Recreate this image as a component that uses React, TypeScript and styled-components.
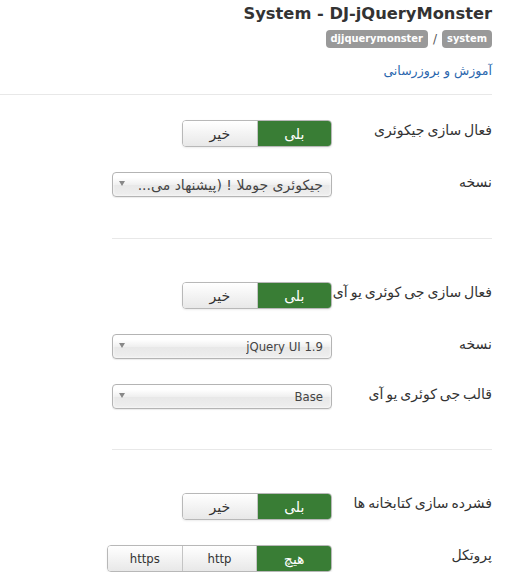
import React from "react";
import styled, { createGlobalStyle } from "styled-components";

const GlobalStyle = createGlobalStyle`
	body {
		margin: 0;
		background: #fff;
		font-family: "DejaVu Sans", sans-serif;
		font-size: 13px;
		color: #333;
	}
`;

const Page = styled.div`
	width: 506px;
	box-sizing: border-box;
	padding: 4px 14px 0 0;
	direction: rtl;
`;

const Header = styled.header`
	text-align: right;
`;

const Title = styled.h1`
	margin: 0;
	direction: ltr;
	font-family: "DejaVu Sans", sans-serif;
	font-size: 16.3px;
	line-height: 20px;
	font-weight: 700;
	color: #333;
`;

const Crumbs = styled.div`
	margin-top: 6px;
	display: flex;
	justify-content: flex-end;
	align-items: center;
	gap: 5px;
	direction: ltr;
	color: #555;
	font-size: 12px;
`;

const Badge = styled.span`
	display: inline-block;
	height: 18px;
	line-height: 18px;
	padding: 0 5px;
	border-radius: 4px;
	background: #999;
	color: #fff;
	font-family: "DejaVu Sans Condensed", "DejaVu Sans", sans-serif;
	font-weight: 700;
	font-size: 11px;
`;

const HelpLink = styled.a`
	display: block;
	margin-top: 13px;
	line-height: 20px;
	font-size: 12.5px;
	color: #2a66ad;
	text-decoration: none;
`;

const Divider = styled.hr<{ $indent?: number; $top: number; $bottom: number }>`
	border: 0;
	border-top: 1px solid #e8e8e8;
	height: 0;
	margin: ${(p) => `${p.$top}px 0 ${p.$bottom}px ${p.$indent ?? 0}px`};
`;

const Fieldset = styled.div`
	display: flex;
	flex-direction: column;
	gap: 25px;
`;

const Row = styled.div`
	display: flex;
	align-items: flex-start;
`;

const Label = styled.label`
	width: 160px;
	flex-shrink: 0;
	white-space: nowrap;
	line-height: 20px;
	font-size: 14px;
	word-spacing: -1.5px;
	color: #333;
	text-align: right;
`;

const ToggleGroup = styled.div<{ $count: number }>`
	display: flex;
	width: ${(p) => p.$count * 75}px;
	height: 27px;
	border: 1px solid #b8b8b8;
	border-radius: 4px;
	overflow: hidden;
	box-sizing: border-box;
	box-shadow: 0 1px 2px rgba(0, 0, 0, 0.08);
`;

const ToggleButton = styled.span<{ $active?: boolean; $latin?: boolean }>`
	flex: 1;
	display: flex;
	align-items: center;
	justify-content: center;
	font-family: ${(p) =>
		p.$latin ? '"DejaVu Sans Condensed", "DejaVu Sans", sans-serif' : '"DejaVu Sans", sans-serif'};
	font-size: ${(p) => (p.$latin ? "13px" : "14px")};
	color: ${(p) => (p.$active ? "#fff" : "#333")};
	background: ${(p) =>
		p.$active ? "#397d35" : "linear-gradient(#ffffff, #e8e8e8)"};
	& + & {
		border-right: 1px solid #c4c4c4;
	}
`;

const Select = styled.div`
	width: 220px;
	height: 25px;
	box-sizing: border-box;
	display: flex;
	align-items: center;
	justify-content: space-between;
	padding: 0 8px 0 6px;
	border: 1px solid #b4b4b4;
	border-radius: 4px;
	background: linear-gradient(#ffffff 20%, #f0f0f0 50%, #e8e8e8 52%, #eeeeee);
	box-shadow: 0 0 3px #fff inset, 0 1px 1px rgba(0, 0, 0, 0.08);
	color: #444;
`;

const SelectText = styled.span<{ $latin?: boolean }>`
	white-space: nowrap;
	overflow: hidden;
	font-family: ${(p) =>
		p.$latin ? '"DejaVu Sans Condensed", "DejaVu Sans", sans-serif' : '"DejaVu Sans", sans-serif'};
	font-size: ${(p) => (p.$latin ? "13px" : "14px")};
`;

const Caret = styled.span`
	flex-shrink: 0;
	width: 0;
	height: 0;
	border-top: 5px solid #888;
	border-left: 3px solid transparent;
	border-right: 3px solid transparent;
	margin-top: -2px;
`;

const isLatin = (s: string) => /^[\x00-\x7f]+$/.test(s);

const Toggle = ({
	options,
	active = 0,
}: {
	options: string[];
	active?: number;
}) => (
	<ToggleGroup $count={options.length}>
		{options.map((o, i) => (
			<ToggleButton key={o} $active={i === active} $latin={isLatin(o)}>
				{o}
			</ToggleButton>
		))}
	</ToggleGroup>
);

const Dropdown = ({ value }: { value: string }) => (
	<Select>
		<SelectText $latin={isLatin(value)}>{value}</SelectText>
		<Caret />
	</Select>
);

export default function App() {
	return (
		<>
			<GlobalStyle />
			<Page>
				<Header>
					<Title>System - DJ-jQueryMonster</Title>
					<Crumbs>
						<Badge>djjquerymonster</Badge>/<Badge>system</Badge>
					</Crumbs>
					<HelpLink href="#">آموزش و بروزرسانی</HelpLink>
				</Header>
				<Divider $top={13} $bottom={25} />
				<Fieldset>
					<Row>
						<Label>فعال سازی جیکوئری</Label>
						<Toggle options={["بلی", "خیر"]} />
					</Row>
					<Row>
						<Label>نسخه</Label>
						<Dropdown value="جیکوئری جوملا ! (پیشنهاد می..." />
					</Row>
				</Fieldset>
				<Divider $indent={112} $top={41} $bottom={43} />
				<Fieldset>
					<Row>
						<Label>فعال سازی جی کوئری یو آی</Label>
						<Toggle options={["بلی", "خیر"]} />
					</Row>
					<Row>
						<Label>نسخه</Label>
						<Dropdown value="jQuery UI 1.9" />
					</Row>
					<Row>
						<Label>قالب جی کوئری یو آی</Label>
						<Dropdown value="Base" />
					</Row>
				</Fieldset>
				<Divider $indent={112} $top={40} $bottom={43} />
				<Fieldset>
					<Row>
						<Label>فشرده سازی کتابخانه ها</Label>
						<Toggle options={["بلی", "خیر"]} />
					</Row>
					<Row>
						<Label>پروتکل</Label>
						<Toggle options={["هیچ", "http", "https"]} />
					</Row>
				</Fieldset>
			</Page>
		</>
	);
}
